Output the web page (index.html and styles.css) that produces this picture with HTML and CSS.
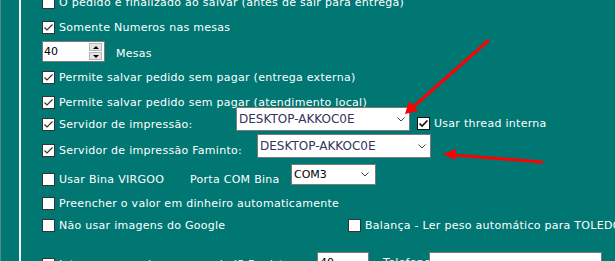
FILE: index.html
```html
<!DOCTYPE html>
<html lang="pt-BR">
<head>
    <meta charset="UTF-8">
    <title>Configurações</title>
    <link rel="stylesheet" href="styles.css">
</head>
<body>
    <div class="form">
        <div class="edge"></div>
        <div class="panel">
            <div class="row">
                <label class="check"><span class="box"></span>O pedido é finalizado ao salvar (antes de sair para entrega)</label>
            </div>
            <div class="row">
                <label class="check"><span class="box on"><svg viewBox="0 0 11 11"><polyline points="1.5,5.5 4,8 9.5,2.5"/></svg></span>Somente Numeros nas mesas</label>
            </div>
            <div class="row mid">
                <div class="spin">
                    <span class="val">40</span>
                    <span class="btns"><i class="up"></i><i class="down"></i></span>
                </div>
                <span class="lbl mesas">Mesas</span>
            </div>
            <div class="row">
                <label class="check"><span class="box on"><svg viewBox="0 0 11 11"><polyline points="1.5,5.5 4,8 9.5,2.5"/></svg></span>Permite salvar pedido sem pagar (entrega externa)</label>
            </div>
            <div class="row">
                <label class="check"><span class="box on"><svg viewBox="0 0 11 11"><polyline points="1.5,5.5 4,8 9.5,2.5"/></svg></span>Permite salvar pedido sem pagar (atendimento local)</label>
            </div>
            <div class="row">
                <label class="check w194 down11"><span class="box on"><svg viewBox="0 0 11 11"><polyline points="1.5,5.5 4,8 9.5,2.5"/></svg></span>Servidor de impressão:</label>
                <div class="combo srv">DESKTOP-AKKOC0E<svg class="chev" viewBox="0 0 8 5"><polyline points="0.5,0.5 4,4 7.5,0.5"/></svg></div>
                <label class="check thread down10"><span class="box on dark"><svg viewBox="0 0 11 11"><polyline points="1.5,5.5 4,8 9.5,2.5"/></svg></span>Usar thread interna</label>
            </div>
            <div class="row">
                <label class="check w215 down10"><span class="box on"><svg viewBox="0 0 11 11"><polyline points="1.5,5.5 4,8 9.5,2.5"/></svg></span>Servidor de impressão Faminto:</label>
                <div class="combo srv">DESKTOP-AKKOC0E<svg class="chev" viewBox="0 0 8 5"><polyline points="0.5,0.5 4,4 7.5,0.5"/></svg></div>
            </div>
            <div class="row">
                <label class="check w148 down9"><span class="box"></span>Usar Bina VIRGOO</label>
                <span class="lbl w101 down9">Porta COM Bina</span>
                <div class="combo com">COM3<svg class="chev" viewBox="0 0 8 5"><polyline points="0.5,0.5 4,4 7.5,0.5"/></svg></div>
            </div>
            <div class="row">
                <label class="check"><span class="box"></span>Preencher o valor em dinheiro automaticamente</label>
            </div>
            <div class="row">
                <label class="check w306"><span class="box"></span>Não usar imagens do Google</label>
                <label class="check"><span class="box"></span>Balança - Ler peso automático para TOLEDO</label>
            </div>
            <div class="row">
                <label class="check w275 down6"><span class="box"></span>Integrar com a impressora do IP Registro</label>
                <div class="edit small">40</div>
                <span class="lbl tel down4">Telefone</span>
                <div class="edit wide"></div>
            </div>
        </div>
        <svg class="arrows" width="615" height="261" viewBox="0 0 615 261">
            <line x1="489" y1="40" x2="413" y2="107"/>
            <polygon points="405,114 409,101 418,111"/>
            <line x1="543" y1="162" x2="453" y2="155"/>
            <polygon points="443,154 456,149 455,160"/>
        </svg>
    </div>
</body>
</html>
```

FILE: styles.css
```css
*{margin:0;padding:0;}
body{
    background-color: #007773;
    font-family: "DejaVu Sans", Verdana, sans-serif;
    font-size: 11px;
    line-height: 13px;
    color: #fff;
    overflow: hidden;
}
.form{
    position: relative;
    display: flex;
    width: 615px;
    height: 261px;
    overflow: hidden;
}
.edge{
    width: 18px;
    flex-shrink: 0;
    border-left: 1px solid #4f8d8a;
}
.panel{
    flex: 1;
    min-width: 0;
    margin-top: -4px;
    padding-left: 21px;
    border-left: 2px solid #fff;
    display: grid;
    grid-template-rows: 25px 20px 30px 25px 11px 27px 30px 33px 22px 33px auto;
    align-content: start;
}
.row{
    display: flex;
    align-items: flex-start;
    white-space: nowrap;
}
.row.mid{
    align-items: center;
    height: 21px;
}
.check{
    display: flex;
    align-items: center;
    gap: 4px;
    flex-shrink: 0;
    letter-spacing: 0.28px;
}
.box{
    width: 13px;
    height: 13px;
    box-sizing: border-box;
    border: 1px solid #333;
    background-color: #fff;
    flex-shrink: 0;
    display: flex;
}
.box svg{
    width: 11px;
    height: 11px;
    fill: none;
    stroke: #333;
    stroke-width: 1.2;
}
.box.dark{
    border-color: #111;
}
.box.dark svg{
    stroke: #111;
    stroke-width: 1.6;
}
.lbl{
    flex-shrink: 0;
    letter-spacing: 0.28px;
}
.mesas{
    margin-left: 11px;
    margin-top: 3px;
}
.w194{ width: 194px; }
.w215{ width: 215px; }
.w148{ width: 148px; }
.w101{ width: 101px; }
.w306{ width: 306px; }
.w275{ width: 275px; }
.down4{ margin-top: 4px; }
.down6{ margin-top: 6px; }
.down9{ margin-top: 9px; }
.down10{ margin-top: 10px; }
.down11{ margin-top: 11px; }
.spin{
    width: 63px;
    height: 21px;
    box-sizing: border-box;
    border: 1px solid #7a7a7a;
    background-color: #fff;
    display: flex;
    justify-content: space-between;
    color: #000;
    flex-shrink: 0;
}
.spin .val{
    padding-left: 1px;
    line-height: 19px;
}
.spin .btns{
    width: 13px;
    margin: 1px 2px 1px 0;
    display: flex;
    flex-direction: column;
    gap: 1px;
}
.spin i{
    flex: 1;
    background-color: #e5e5e5;
    border: 1px solid #b5b5b5;
    position: relative;
}
.spin i::after{
    content: '';
    position: absolute;
    left: 3px;
    top: 2px;
    border-left: 3px solid transparent;
    border-right: 3px solid transparent;
}
.spin .up::after{
    border-bottom: 3px solid #000;
}
.spin .down::after{
    border-top: 3px solid #000;
}
.combo{
    display: flex;
    align-items: center;
    justify-content: space-between;
    box-sizing: border-box;
    background-color: #fff;
    border: 1px solid #7a7a7a;
    padding: 0 4px 0 2px;
    color: #34345a;
    flex-shrink: 0;
}
.combo.srv{
    width: 174px;
    height: 24px;
    font-size: 12px;
}
.combo.com{
    width: 85px;
    height: 21px;
    color: #000;
    padding-right: 6px;
}
.chev{
    width: 8px;
    height: 5px;
    fill: none;
    stroke: #444;
    stroke-width: 1;
}
.thread{
    margin-left: 7px;
}
.edit{
    height: 21px;
    box-sizing: border-box;
    border: 1px solid #7a7a7a;
    background-color: #fff;
    color: #000;
    padding-left: 2px;
    line-height: 19px;
    flex-shrink: 0;
}
.edit.small{ width: 52px; }
.edit.wide{ width: 173px; }
.tel{
    width: 46px;
    margin-left: 14px;
}
.arrows{
    position: absolute;
    top: 0;
    left: 0;
    pointer-events: none;
}
.arrows line{
    stroke: #f00;
    stroke-width: 3;
}
.arrows polygon{
    fill: #f00;
}
```
